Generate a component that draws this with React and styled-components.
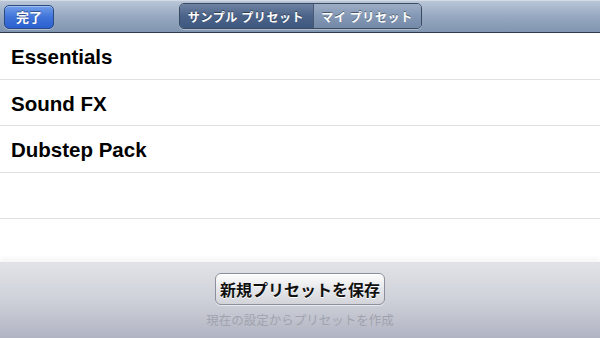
import React from "react";
import styled, { createGlobalStyle } from "styled-components";

const Global = createGlobalStyle`
  html, body { margin: 0; padding: 0; }
  body { font-family: "Liberation Sans", "Noto Sans CJK JP", sans-serif; background: #fff; }
  #root { width: 600px; height: 338px; }
`;

const Screen = styled.div`
  width: 600px;
  height: 338px;
  display: flex;
  flex-direction: column;
  overflow: hidden;
  background: #fff;
`;

const NavBar = styled.div`
  height: 32px;
  flex: none;
  display: grid;
  grid-template-columns: 1fr auto 1fr;
  align-items: center;
  padding: 0 4px;
  background: linear-gradient(#bcc8d9 0%, #97a9c1 50%, #8095b0 100%);
  border-bottom: 1px solid #2e3b4d;
  box-shadow: inset 0 1px 0 #d2dbe6;
`;

const DoneButton = styled.button`
  justify-self: start;
  width: 50px;
  height: 24px;
  margin-top: 1px;
  border-radius: 5px;
  border: 1px solid #2a4a86;
  background: linear-gradient(#729ee9 0%, #4074da 50%, #2b60d0 100%);
  box-shadow: inset 0 1px 0 rgba(255,255,255,0.35), 0 1px 0 rgba(255,255,255,0.35);
  color: #fff;
  font-family: "Noto Sans CJK JP", sans-serif;
  font-weight: 700;
  font-size: 13px;
  padding: 0;
  text-shadow: 0 -1px 0 rgba(0,0,0,0.4);
`;

const Segmented = styled.div`
  display: flex;
  height: 24px;
  border-radius: 5px;
  border: 1px solid #3a4a60;
  overflow: hidden;
  box-shadow: 0 1px 0 rgba(255,255,255,0.35);
`;

const Segment = styled.div`
  display: flex;
  align-items: center;
  justify-content: center;
  width: ${p => p.$w}px;
  color: #fff;
  font-family: "Noto Sans CJK JP", sans-serif;
  font-weight: 700;
  font-size: 12px;
  letter-spacing: 0.6px;
  text-shadow: 0 -1px 0 rgba(0,0,0,0.45);
  background: ${p => p.$active
    ? "linear-gradient(#6d83a3 0%, #4b6388 50%, #3f5880 100%)"
    : "linear-gradient(#9dadc5 0%, #8398b5 50%, #7589a8 100%)"};
  & + & { border-left: 1px solid #4a5a72; }
`;

const List = styled.div`
  flex: 1;
  min-height: 0;
  overflow: hidden;
  display: flex;
  flex-direction: column;
  background: #fff;
`;

const Row = styled.div`
  height: 46.3px;
  flex: none;
  box-sizing: border-box;
  display: flex;
  align-items: center;
  padding: 2px 11px 0;
  border-bottom: 1px solid #e0e0e0;
  font-family: "Liberation Sans", Arial, sans-serif;
  font-weight: 700;
  font-size: 20.5px;
  color: #000;
  &:first-child { height: 47px; }
`;

const Toolbar = styled.div`
  height: 77px;
  flex: none;
  display: flex;
  flex-direction: column;
  align-items: center;
  padding-top: 11px;
  box-sizing: border-box;
  border-top: 1px solid #f6f6f8;
  background: linear-gradient(#e2e3e8 0%, #cfd1d9 50%, #b1b4c2 100%);
  box-shadow: 0 -4px 4px rgba(0,0,0,0.03);
`;

const SaveButton = styled.button`
  width: 170px;
  height: 32px;
  border-radius: 6px;
  border: 1px solid #8c8f9c;
  background: linear-gradient(#fdfdfd 0%, #e6e7ea 50%, #d2d4da 100%);
  box-shadow: inset 0 1px 0 #fff, 0 1px 0 rgba(255,255,255,0.6);
  color: #111;
  font-family: "Noto Sans CJK JP", sans-serif;
  font-weight: 700;
  font-size: 16px;
  padding: 0;
  text-shadow: 0 1px 0 #fff;
`;

const Caption = styled.div`
  margin-top: 5px;
  font-family: "Noto Sans CJK JP", sans-serif;
  font-size: 12.5px;
  color: #a0a3ae;
`;

const Spacer = styled.div``;

export default function App() {
  const rows = ["Essentials", "Sound FX", "Dubstep Pack", "", ""];
  return (
    <>
      <Global />
      <Screen>
        <NavBar>
          <DoneButton>完了</DoneButton>
          <Segmented>
            <Segment $active $w={133}>サンプル プリセット</Segment>
            <Segment $w={107}>マイ プリセット</Segment>
          </Segmented>
          <Spacer />
        </NavBar>
        <List>
          {rows.map((r, i) => (
            <Row key={i}>{r}</Row>
          ))}
        </List>
        <Toolbar>
          <SaveButton>新規プリセットを保存</SaveButton>
          <Caption>現在の設定からプリセットを作成</Caption>
        </Toolbar>
      </Screen>
    </>
  );
}
